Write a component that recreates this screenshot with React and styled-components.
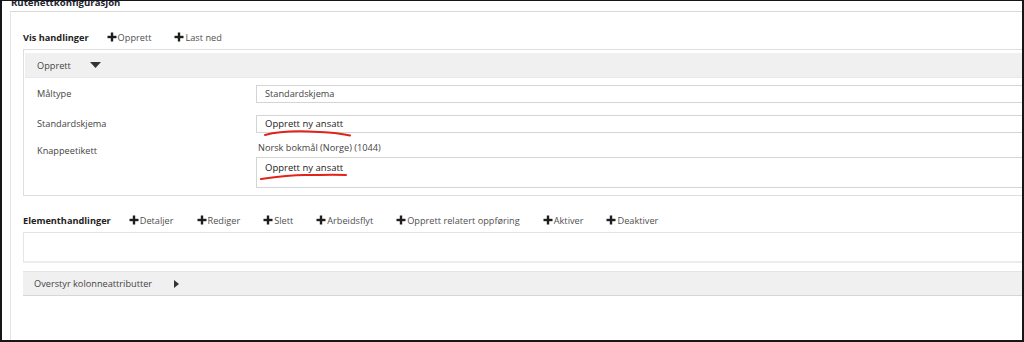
import styled, { createGlobalStyle } from 'styled-components'

const GlobalStyle = createGlobalStyle`
    body {
        margin: 0;
        background: #ffffff;
        font-family: 'Open Sans', 'Noto Sans', sans-serif;
    }
`

const Frame = styled.div`
    position: relative;
    width: 1024px;
    height: 342px;
    box-sizing: border-box;
    border: 2px solid #161616;
    border-top-width: 1px;
    overflow: hidden;
    background: #ffffff;
`

const Title = styled.div`
    height: 10px;
    padding-left: 9px;
    font-size: 9.6px;
    font-weight: 700;
    line-height: 10px;
    color: #1c2330;
    margin-top: -3px;
    margin-bottom: 3px;
`

const Panel = styled.div`
    margin-left: 8px;
    margin-right: -40px;
    height: 400px;
    padding-left: 12px;
    border-left: 1px solid #e4e4e4;
    border-top: 1px solid #d9d9d9;
`

const ActionBar = styled.div`
    display: flex;
    align-items: center;
    height: 14px;
    margin-top: ${(p) => p.$top}px;
    margin-bottom: 5px;
    gap: 23px;
`

const BarTitle = styled.span`
    font-size: 9.2px;
    font-weight: 700;
    color: #222222;
    margin-right: -5px;
`

const Action = styled.span`
    display: inline-flex;
    align-items: center;
    gap: 1px;
    font-size: 9.2px;
    color: #505050;
`

const Section = styled.div`
    border: 1px solid #dedede;
    border-right: none;
    padding: 3px 0 7px 1px;
`

const SectionHeader = styled.div`
    display: flex;
    align-items: center;
    gap: 19px;
    height: 24px;
    padding-left: 12px;
    background: #f1f0f0;
    border-bottom: 1px solid #e8e8e8;
    font-size: 9.2px;
    color: #444444;
`

const FormRow = styled.div`
    position: relative;
    display: grid;
    grid-template-columns: 219px 1fr;
    margin-top: ${(p) => p.$top}px;
    padding-left: 12px;
`

const Label = styled.div`
    font-size: 9.2px;
    color: #444444;
    line-height: 14px;
    padding-top: ${(p) => p.$pad || 2}px;
`

const Field = styled.div`
    display: flex;
    flex-direction: column;
`

const Locale = styled.div`
    font-size: 9.2px;
    line-height: 14px;
    color: #444444;
    padding-left: 2px;
    margin-bottom: 2px;
`

const Input = styled.div`
    height: ${(p) => (p.$tall ? 31 : 18)}px;
    box-sizing: border-box;
    border: 1px solid #d4d4d4;
    border-right: none;
    padding: ${(p) => (p.$tall ? 2 : 0)}px 8px 0;
    font-size: ${(p) => (p.$big ? 9.5 : 9.2)}px;
    line-height: 16px;
    color: ${(p) => (p.$big ? '#222222' : '#444444')};
`

const Scribble = styled.svg`
    position: absolute;
    left: ${(p) => p.$x}px;
    top: ${(p) => p.$y}px;
    pointer-events: none;
`

const EmptyBox = styled.div`
    height: 28px;
    border-top: 1px solid #e3e3e3;
    border-left: 1px solid #e6e6e6;
    border-bottom: 2px solid #ececec;
`

const CollapsedBar = styled.div`
    display: flex;
    align-items: center;
    gap: 22px;
    margin-top: 8px;
    height: 23px;
    padding-left: 11px;
    background: #f1f0f0;
    border-top: 1px solid #e4e4e4;
    border-bottom: 1px solid #d6d6d6;
    font-size: 9.2px;
    color: #444444;
`

function Plus() {
    return (
        <svg width="10" height="10" viewBox="0 0 10 10">
            <rect x="0.5" y="3.8" width="9" height="2.4" fill="#1e1e1e" />
            <rect x="3.8" y="0.5" width="2.4" height="9" fill="#1e1e1e" />
        </svg>
    )
}

function Caret({ dir }) {
    return dir === 'down' ? (
        <svg width="11" height="6" viewBox="0 0 11 6">
            <path d="M0 0 L11 0 L5.5 6 Z" fill="#333" />
        </svg>
    ) : (
        <svg width="5" height="8" viewBox="0 0 5 8">
            <path d="M0 0 L5 4 L0 8 Z" fill="#333" />
        </svg>
    )
}

const viewActions = ['Opprett', 'Last ned']
const itemActions = [
    'Detaljer',
    'Rediger',
    'Slett',
    'Arbeidsflyt',
    'Opprett relatert oppføring',
    'Aktiver',
    'Deaktiver',
]

function Actions({ title, items, top }) {
    return (
        <ActionBar $top={top}>
            <BarTitle>{title}</BarTitle>
            {items.map((a) => (
                <Action key={a}>
                    <Plus />
                    {a}
                </Action>
            ))}
        </ActionBar>
    )
}

export default function App() {
    return (
        <>
            <GlobalStyle />
            <Frame>
                <Title>Rutenettkonfigurasjon</Title>
                <Panel>
                    <Actions title="Vis handlinger" items={viewActions} top={18} />
                    <Section>
                        <SectionHeader>
                            Opprett
                            <Caret dir="down" />
                        </SectionHeader>
                        <FormRow $top={7}>
                            <Label>Måltype</Label>
                            <Input>Standardskjema</Input>
                        </FormRow>
                        <FormRow $top={12}>
                            <Label>Standardskjema</Label>
                            <Input $big>Opprett ny ansatt</Input>
                            <Scribble $x={239} $y={15} width="90" height="8" viewBox="0 0 90 8">
                                <path
                                    d="M1 5 C 12 2, 30 1, 45 1.5 S 72 2, 86 5.5"
                                    stroke="#e2231a"
                                    strokeWidth="2"
                                    fill="none"
                                    strokeLinecap="round"
                                />
                            </Scribble>
                        </FormRow>
                        <FormRow $top={8}>
                            <Label $pad={3}>Knappeetikett</Label>
                            <Field>
                                <Locale>Norsk bokmål (Norge) (1044)</Locale>
                                <Input $tall $big>Opprett ny ansatt</Input>
                            </Field>
                            <Scribble $x={235} $y={32} width="90" height="8" viewBox="0 0 90 8">
                                <path
                                    d="M1 6 C 15 4, 30 2, 45 2 S 73 1.5, 86 2"
                                    stroke="#e2231a"
                                    strokeWidth="2"
                                    fill="none"
                                    strokeLinecap="round"
                                />
                            </Scribble>
                        </FormRow>
                    </Section>
                    <Actions title="Elementhandlinger" items={itemActions} top={17} />
                    <EmptyBox />
                    <CollapsedBar>
                        Overstyr kolonneattributter
                        <Caret dir="right" />
                    </CollapsedBar>
                </Panel>
            </Frame>
        </>
    )
}
